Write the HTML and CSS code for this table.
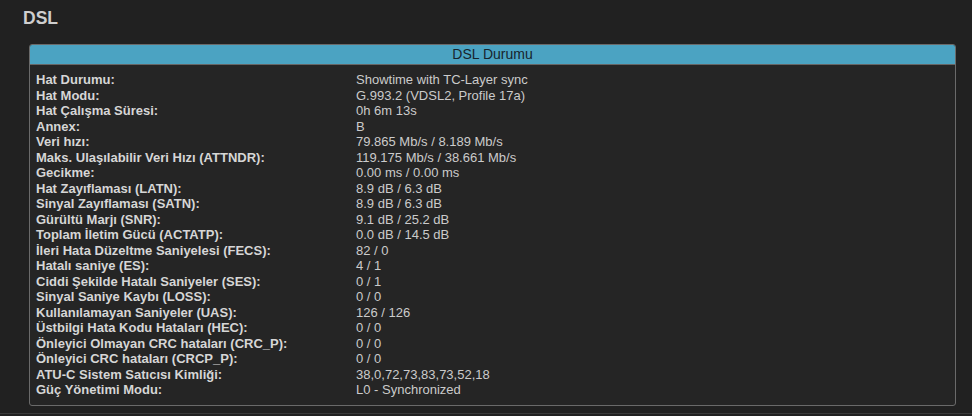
FILE: index.html
```html
<!DOCTYPE html>
<html>
<head>
<meta charset="utf-8">
<link rel="stylesheet" href="styles.css">
</head>
<body>
<div class="page">
  <h1 class="title">DSL</h1>
  <div class="panel">
    <div class="panel-head">DSL Durumu</div>
    <div class="rows">
      <div class="lbl">Hat Durumu:</div><div class="val">Showtime with TC-Layer sync</div>
      <div class="lbl">Hat Modu:</div><div class="val">G.993.2 (VDSL2, Profile 17a)</div>
      <div class="lbl">Hat Çalışma Süresi:</div><div class="val">0h 6m 13s</div>
      <div class="lbl">Annex:</div><div class="val">B</div>
      <div class="lbl">Veri hızı:</div><div class="val">79.865 Mb/s / 8.189 Mb/s</div>
      <div class="lbl">Maks. Ulaşılabilir Veri Hızı (ATTNDR):</div><div class="val">119.175 Mb/s / 38.661 Mb/s</div>
      <div class="lbl">Gecikme:</div><div class="val">0.00 ms / 0.00 ms</div>
      <div class="lbl">Hat Zayıflaması (LATN):</div><div class="val">8.9 dB / 6.3 dB</div>
      <div class="lbl">Sinyal Zayıflaması (SATN):</div><div class="val">8.9 dB / 6.3 dB</div>
      <div class="lbl">Gürültü Marjı (SNR):</div><div class="val">9.1 dB / 25.2 dB</div>
      <div class="lbl">Toplam İletim Gücü (ACTATP):</div><div class="val">0.0 dB / 14.5 dB</div>
      <div class="lbl">İleri Hata Düzeltme Saniyelesi (FECS):</div><div class="val">82 / 0</div>
      <div class="lbl">Hatalı saniye (ES):</div><div class="val">4 / 1</div>
      <div class="lbl">Ciddi Şekilde Hatalı Saniyeler (SES):</div><div class="val">0 / 1</div>
      <div class="lbl">Sinyal Saniye Kaybı (LOSS):</div><div class="val">0 / 0</div>
      <div class="lbl">Kullanılamayan Saniyeler (UAS):</div><div class="val">126 / 126</div>
      <div class="lbl">Üstbilgi Hata Kodu Hataları (HEC):</div><div class="val">0 / 0</div>
      <div class="lbl">Önleyici Olmayan CRC hataları (CRC_P):</div><div class="val">0 / 0</div>
      <div class="lbl">Önleyici CRC hataları (CRCP_P):</div><div class="val">0 / 0</div>
      <div class="lbl">ATU-C Sistem Satıcısı Kimliği:</div><div class="val">38,0,72,73,83,73,52,18</div>
      <div class="lbl">Güç Yönetimi Modu:</div><div class="val">L0 - Synchronized</div>
    </div>
  </div>
</div>
</body>
</html>
```
FILE: styles.css
```css
html, body {
  margin: 0;
  padding: 0;
  background: #212121;
  font-family: "Liberation Sans", Arial, sans-serif;
}
.page {
  height: 404px;
  border-bottom: 1px solid #3a3a3a;
  padding: 9px 16px 0 29px;
  box-sizing: content-box;
  overflow: hidden;
}
.title {
  margin: 0 0 16px -6px;
  font-size: 17.5px;
  line-height: 19px;
  font-weight: bold;
  color: #cfcfcf;
}
.panel {
  border: 1px solid #6a6a6a;
  border-radius: 3px;
  background: #252525;
  overflow: hidden;
}
.panel-head {
  height: 19px;
  line-height: 19px;
  background: #4ba3c2;
  border-bottom: 1px solid #666;
  text-align: center;
  font-size: 14px;
  color: #17232c;
}
.rows {
  display: grid;
  grid-template-columns: 320px 1fr;
  grid-auto-rows: 15.5px;
  padding: 7px 6px 7px 6px;
  font-size: 13px;
  line-height: 15.5px;
}
.lbl {
  font-weight: bold;
  color: #d6d6d6;
  white-space: nowrap;
}
.val {
  color: #cbcbcb;
  white-space: nowrap;
}
```
